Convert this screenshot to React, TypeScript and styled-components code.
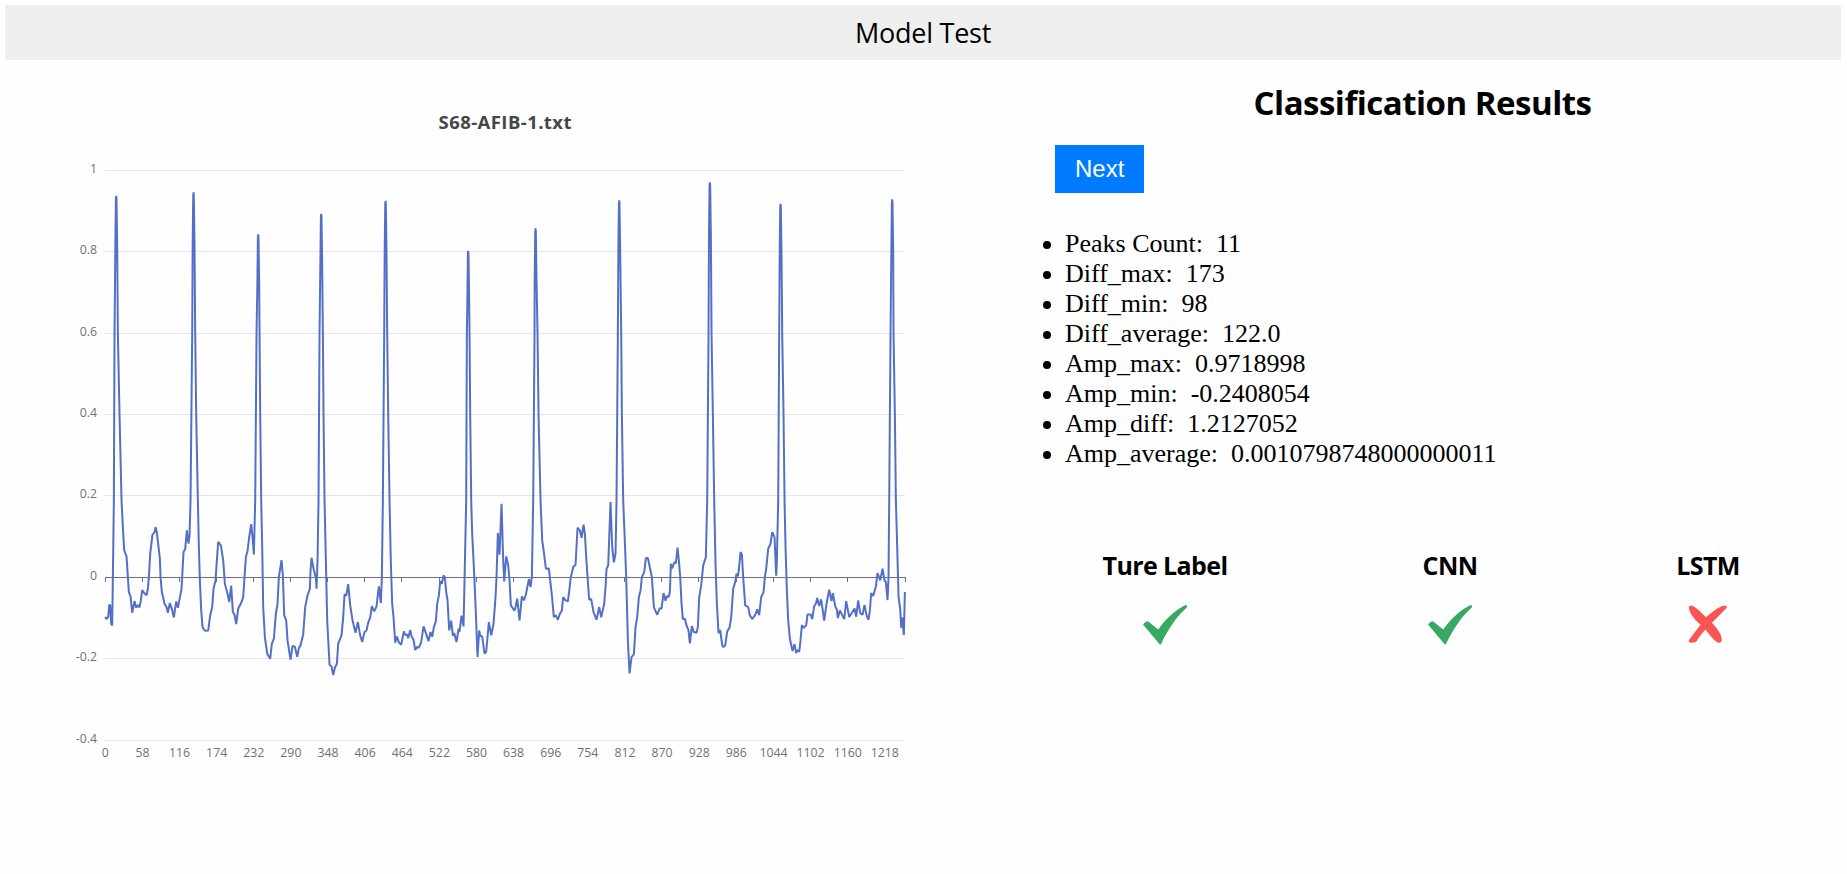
import React from 'react';
import styled, { createGlobalStyle } from 'styled-components';

const GlobalStyle = createGlobalStyle`
  body {
    margin: 0;
    background: #fefefe;
    color: #000;
  }
`;

const uiFont = `'Open Sans', 'Noto Sans', sans-serif`;

const Page = styled.div`
  box-sizing: border-box;
  height: 874px;
  padding: 5px 6px 0 5px;
  overflow: hidden;
`;

const Header = styled.header`
  display: flex;
  align-items: center;
  justify-content: center;
  height: 55px;
  background: #efefee;
  font: 400 27px/55px ${uiFont};
  letter-spacing: -0.25px;
`;

const Content = styled.main`
  display: flex;
`;

const ChartPanel = styled.section`
  width: 995px;
  height: 720px;
`;

const ChartSvg = styled.svg`
  display: block;
`;

const ChartTitle = styled.text`
  font: 700 18.5px ${uiFont};
  fill: #464646;
  text-anchor: middle;
`;

const AxisLabel = styled.text<{ $anchor: 'middle' | 'end' }>`
  font: 400 12.3px ${uiFont};
  fill: #6e7079;
  text-anchor: ${(p) => p.$anchor};
`;

const ResultsPanel = styled.section`
  display: flex;
  flex-direction: column;
  align-items: flex-start;
  flex: 1;
`;

const ResultsTitle = styled.h1`
  align-self: stretch;
  box-sizing: border-box;
  margin: 21px 0 0;
  padding-left: 4px;
  font: 700 33px/44px ${uiFont};
  letter-spacing: -0.5px;
  text-align: center;
`;

const NextButton = styled.button`
  margin: 20px 0 0 55px;
  padding: 10px 20px;
  border: 0;
  background: #007bff;
  color: #fff;
  font: 400 24px/28px 'Liberation Sans', sans-serif;
`;

const StatsList = styled.ul`
  margin: 36px 0 0 25px;
  padding-left: 40px;
  font: 400 26px/30px 'Liberation Serif', serif;
`;

const Stat = styled.li`
  white-space: pre;
`;

const Labels = styled.div`
  display: grid;
  grid-template-columns: 302px 268px 248px;
  margin: 78px 0 0 14px;
`;

const LabelColumn = styled.div`
  display: flex;
  flex-direction: column;
  align-items: center;
  font: 700 25px/36px ${uiFont};
  letter-spacing: -0.6px;
`;

const MarkSvg = styled.svg`
  display: block;
  margin-top: 21px;
`;

type Segment = { shift: number; points: string };

// Trace geometry, three units per pixel; each stretch has its own x origin.
const segments: Segment[] = [
  {
    shift: 0,
    points:
      '135,409 139,416 144,410 147,374 150,374 153,430 156,435 158,290 161,60 163,-440 168,-856 173,-440 178,-197 184,60 188,140 192,210 199,228 203,290 206,335 211,348 216,397 223,362 228,382 233,374 238,381 242,360 246,329 252,338 259,345 263,325 266,290 270,220 277,162 283,156 286,140 290,156 295,200 299,235 301,290 305,335 313,370 319,380 323,397 329,368 335,386 341,411 348,363 353,382 358,357 364,325 366,290 370,215 375,206 380,150 385,190 388,165 391,60 396,-440 400,-866 405,-440 408,-197 413,60 416,200 419,300 423,390 427,440 434,451 444,450 450,405 456,380 460,325 466,300 470,240 474,184 482,195 489,240 494,310 502,340 507,365 513,316 518,395 523,403 528,431 534,385 543,367 549,350 553,290 557,230 562,212 567,170 573,131 577,170 581,222 585,60 589,-440 594,-740 598,-440 600,-197 603,60 606,200 609,380 614,470 621,520 630,535 635,490 641,475 647,400 652,370 656,290 664,239 668,285 672,405 678,420 682,480',
  },
  {
    shift: 660,
    points:
      '31,538 37,497 44,499 51,529 56,503 61,495 69,462 75,380 82,345 89,325 91,270 94,232 100,265 107,292 109,325 112,240 115,60 118,-440 123,-802 128,-440 130,-197 133,60 137,240 141,420 148,553 154,558 159,584 164,562 170,550 174,490 184,465 189,410 193,342 198,346 204,311 210,375 217,420 226,457 233,425 240,465 246,485 253,455 259,450 264,427 270,412 275,377 282,393 289,378 296,318 302,368 305,290 308,60 312,-440 316,-841 321,-440 324,-197 328,60 332,250 336,370 340,410 345,487 350,468 356,486 363,493 371,453 374,463 380,462 384,473 390,449 394,468 400,478 405,509 410,500 416,502 423,485 430,438 437,458 445,482 451,455 456,469 461,440 467,423 471,370 476,345 480,302 485,310 490,285 494,291 498,335 502,360 507,450 513,421 518,466 522,458 529,485 535,445 538,454 544,406 550,438 553,300 558,60 560,-440 564,-691 568,-440 570,-197 573,60 576,160 580,240 585,350 592,530 597,450 600,466 606,468 613,520 618,514 626,425 633,465 640,430 646,350 649,290 653,158 658,223 664,70 669,240 672,303 678,228 684,255 688,300',
  },
  {
    shift: 1260,
    points:
      '92,375 103,391 106,380 111,355 118,420 125,348 131,360 137,343 146,296 151,320 155,290 159,60 163,-440 166,-758 172,-440 175,-197 181,60 186,180 191,215 197,265 206,264 210,300 216,355 221,410 227,405 233,418 239,400 245,390 249,350 256,360 263,363 268,325 271,295 279,260 286,253 292,142 299,150 304,172 310,133 314,160 318,230 322,290 327,358 333,356 340,395 349,418 357,380 363,411 372,370 376,320 379,265 384,255 391,65 396,200 401,246 406,220 409,60 413,-440 417,-842 423,-440 425,-197 429,60 433,160 438,290 443,480 448,579 454,530 461,522 466,440 471,410 476,350 481,330 485,290 492,275 497,233 503,233 509,262 515,290 521,380 526,392 531,403 539,383 544,385 550,338 556,361 560,347 565,350 569,335 572,250 576,264 582,246 587,248 592,202 596,240 600,290 604,370 608,416 614,415 619,435 625,450 629,489 635,437 641,455 649,457 653,440 657,350 663,315 669,255 677,230 681,60 685,-440 689,-896 694,-440 698,-197 702,60 706,250 710,370',
  },
  {
    shift: 1920,
    points:
      '55,458 60,449 66,495 70,500 75,495 81,453 88,442 93,410 99,325 105,305 109,280 113,288 116,268 121,215 125,222 129,290 135,375 144,380 149,405 156,416 166,402 171,387 177,404 183,350 190,336 194,290 198,265 204,205 211,190 216,155 223,170 228,286 230,240 234,60 237,-440 241,-832 246,-440 250,-197 253,60 256,200 260,330 264,420 269,475 277,512 283,491 288,518 292,509 297,514 300,490 305,434 310,443 318,435 322,402 331,402 336,416 342,377 347,370 351,353 357,377 363,357 372,421 379,370 387,328 394,362 398,338 405,377 410,388 413,413 419,390 432,416 438,362 447,410 463,384 468,409 474,360 480,398 487,403 493,374 499,405 505,418 509,390 513,338 519,347 527,318 532,278 540,300 547,265 553,300 557,305 562,359 565,290 567,60 571,-440 576,-845 580,-440 584,-197 587,60 591,200 595,350 600,385 603,442 606,411 611,464 614,335',
  },
];

// R peaks end in a narrow rounded crest rather than a single sharp vertex.
const crest = (x: number, y: number): number[][] =>
  y < -600
    ? [[x - 2.6, y + 160], [x - 0.9, y + 12], [x, y + 2], [x + 0.9, y + 12], [x + 3, y + 160]]
    : [[x, y]];

const trace = segments
  .flatMap(({ shift, points }) =>
    points.split(' ').flatMap((pair) => {
      const [px, py] = pair.split(',').map(Number);
      return crest(px, py).map(
        ([x, y]) => `${((x + shift) / 3 + 55.2).toFixed(2)},${(y / 3 + 420.4).toFixed(2)}`,
      );
    }),
  )
  .join(' ');

const yAxis: [string, number][] = [
  ['1', 110.5],
  ['0.8', 191.5],
  ['0.6', 273.5],
  ['0.4', 354.5],
  ['0.2', 435.5],
  ['0', 517.5],
  ['-0.2', 598.5],
  ['-0.4', 680.5],
];

const ticks = Array.from({ length: 22 }, (_, i) => i * 58);

function SignalChart() {
  return (
    <ChartSvg width="995" height="720" viewBox="0 0 995 720">
      <ChartTitle x="500" y="69" textLength="133">
        S68-AFIB-1.txt
      </ChartTitle>
      {yAxis.map(([label, y]) => (
        <g key={label}>
          {label !== '0' && <path d={`M100 ${y}H900`} stroke="#e0e6f1" />}
          <AxisLabel $anchor="end" x="92" y={y + 2.5}>
            {label}
          </AxisLabel>
        </g>
      ))}
      <path d="M100 517.5H901M900.5 517V522" stroke="#6e7079" fill="none" />
      {ticks.map((n) => {
        const x = 100 + n * 0.64;
        return (
          <g key={n}>
            <path d={`M${Math.floor(x) + 0.5} 517V522`} stroke="#6e7079" />
            <AxisLabel $anchor="middle" x={x + 0.3} y="697">
              {n}
            </AxisLabel>
          </g>
        );
      })}
      <polyline points={trace} fill="none" stroke="#5470c6" strokeWidth="2" strokeLinejoin="bevel" />
    </ChartSvg>
  );
}

function Check() {
  return (
    <MarkSvg width="46" height="42" viewBox="0 0 46 42">
      <path
        d="M1 20.5Q3.5 17.2 6 17.2L16.2 25.6C23 16 33 6 44 .8Q45.5 1.2 44.8 3.5C35 12 26 25 18.8 40.5Q17.5 40.5 17 39.5Z"
        fill="#37a962"
      />
    </MarkSvg>
  );
}

function Cross() {
  return (
    <MarkSvg width="46" height="42" viewBox="0 0 46 42">
      <path
        d="M3.8 3.2Q3.8 1.6 6.5 1.6Q10 2.2 21 13.2Q33 2.3 39.5 1.4Q43 1.8 41.5 4L27 18.8Q36.5 29 36.8 35.5Q36.5 39.3 33 38.8Q29 37 20.5 25.5Q14 32.5 11.5 37.5Q10.5 38.8 4.5 38.6Q3 37.5 4.8 34.7L15.5 20.8Q3.8 10.5 3.8 3.2Z"
        fill="#fa5552"
      />
    </MarkSvg>
  );
}

const stats: [string, string][] = [
  ['Peaks Count', '11'],
  ['Diff_max', '173'],
  ['Diff_min', '98'],
  ['Diff_average', '122.0'],
  ['Amp_max', '0.9718998'],
  ['Amp_min', '-0.2408054'],
  ['Amp_diff', '1.2127052'],
  ['Amp_average', '0.0010798748000000011'],
];

const results = [
  { name: 'Ture Label', ok: true },
  { name: 'CNN', ok: true },
  { name: 'LSTM', ok: false },
];

export default function App() {
  return (
    <Page>
      <GlobalStyle />
      <Header>Model Test</Header>
      <Content>
        <ChartPanel>
          <SignalChart />
        </ChartPanel>
        <ResultsPanel>
          <ResultsTitle>Classification Results</ResultsTitle>
          <NextButton>Next</NextButton>
          <StatsList>
            {stats.map(([name, value]) => (
              <Stat key={name}>{`${name}:  ${value}`}</Stat>
            ))}
          </StatsList>
          <Labels>
            {results.map(({ name, ok }) => (
              <LabelColumn key={name}>
                {name}
                {ok ? <Check /> : <Cross />}
              </LabelColumn>
            ))}
          </Labels>
        </ResultsPanel>
      </Content>
    </Page>
  );
}
